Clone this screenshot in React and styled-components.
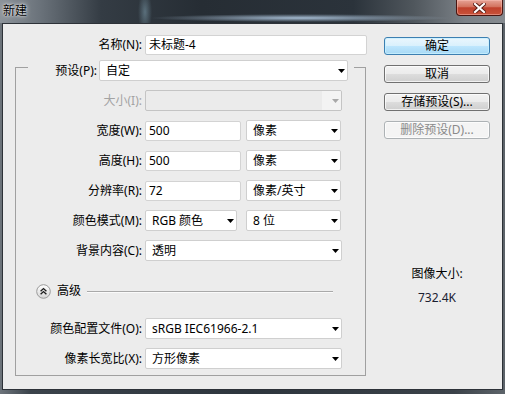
import styled, { createGlobalStyle } from "styled-components";

const font = `"Noto Sans", "Noto Sans CJK SC", sans-serif`;

const GlobalStyle = createGlobalStyle`
  html, body {
    margin: 0;
    padding: 0;
  }
  body {
    background: #2c353d;
    font-family: ${font};
    font-size: 12px;
    color: #000;
  }
`;

const Window = styled.div`
  width: 505px;
  height: 394px;
  display: flex;
  flex-direction: column;
  overflow: hidden;
  background: linear-gradient(
    90deg,
    #6d747b 0%,
    #3b434b 6%,
    #2d353d 50%,
    #3b4249 90%,
    #5d646a 100%
  );
`;

const TitleBar = styled.div`
  height: 23px;
  flex: none;
  display: flex;
  justify-content: space-between;
  align-items: flex-start;
  background:
    radial-gradient(ellipse 150px 4px at 300px 18px, rgba(185, 210, 235, 0.85), rgba(185, 210, 235, 0)),
    radial-gradient(ellipse 7px 22px at 145px 12px, rgba(120, 150, 165, 0.6), rgba(120, 150, 165, 0)),
    linear-gradient(
      90deg,
      #8c939a 0%,
      #6a727a 8%,
      #343c44 20%,
      #262d34 40%,
      #2b333b 70%,
      #50575d 82%,
      #7b8187 92%,
      #868b90 100%
    );
`;

const Title = styled.div`
  padding: 4px 0 0 3px;
  line-height: 14px;
  color: #000;
  text-shadow: 0 0 5px rgba(255, 255, 255, 0.9), 0 0 2px rgba(255, 255, 255, 0.9);
`;

const CloseButton = styled.div`
  width: 47px;
  height: 16px;
  margin-right: 2px;
  box-sizing: border-box;
  border: 1px solid #4a1510;
  border-top: none;
  border-radius: 0 0 4px 4px;
  display: flex;
  align-items: center;
  justify-content: center;
  background: linear-gradient(#e6a396 0%, #d3735f 45%, #c0412c 52%, #c8523a 100%);
  box-shadow: inset 0 0 0 1px rgba(255, 200, 190, 0.45);
`;

const Client = styled.div`
  flex: 1;
  margin: 0 2px 4px;
  border: 1px solid #2d3238;
  background: #ececec;
  display: flex;
  padding-top: 11px;
  box-sizing: border-box;
`;

const LeftPane = styled.div`
  width: 364px;
  padding-left: 12px;
  box-sizing: border-box;
  flex: none;
`;

const RightPane = styled.div`
  width: 106px;
  margin-left: 17px;
  padding-top: 2px;
  display: flex;
  flex-direction: column;
`;

const NameRow = styled.div`
  display: grid;
  grid-template-columns: 127px 222px;
  column-gap: 3px;
  align-items: center;
  height: 20px;
`;

const Label = styled.span`
  text-align: right;
  white-space: nowrap;
  line-height: 16px;
  color: ${(p) => (p.$disabled ? "#a3a3a3" : "#000")};
`;

const TextBox = styled.div`
  height: 20px;
  width: ${(p) => p.$width || 222}px;
  box-sizing: border-box;
  border: 1px solid #d3d3d3;
  border-radius: 2px;
  background: #fff;
  padding-left: 3px;
  line-height: 18px;
  white-space: nowrap;
`;

const Group = styled.fieldset`
  width: 351px;
  box-sizing: border-box;
  margin: -2px 0 0 0;
  padding: 0 0 6px 0;
  border: 1px solid #a0a0a0;
  min-inline-size: 0;
`;

const Legend = styled.legend`
  display: flex;
  align-items: center;
  gap: 2px;
  margin-left: 12px;
  padding: 7px 6px 0 0;
  float: none;
`;

const LegendLabel = styled(Label)`
  width: 69px;
`;

const FieldRow = styled.div`
  display: grid;
  grid-template-columns: 126px auto;
  column-gap: 3px;
  align-items: center;
  height: 21px;
  margin-top: ${(p) => p.$gap ?? 9}px;
`;

const Pair = styled.div`
  width: 196px;
  display: flex;
  justify-content: space-between;
  align-items: center;
`;

const SelectBox = styled.div`
  height: 21px;
  width: ${(p) => p.$width}px;
  box-sizing: border-box;
  border: 1px solid ${(p) => (p.$disabled ? "#c4c4c4" : "#cfcfcf")};
  border-radius: 2px;
  background: ${(p) => (p.$disabled ? "#ebebeb" : "#fff")};
  display: flex;
  align-items: center;
  overflow: hidden;
`;

const SelectText = styled.span`
  flex: 1;
  padding-left: 6px;
  line-height: 19px;
  white-space: nowrap;
`;

const ArrowBox = styled.span`
  width: 19px;
  height: 100%;
  display: flex;
  align-items: center;
  justify-content: flex-end;
  padding-right: 2px;
  box-sizing: border-box;
  background: ${(p) => (p.$disabled ? "#f3f3f3" : "transparent")};
`;

const AdvancedRow = styled.div`
  display: flex;
  align-items: center;
  height: 16px;
  margin-top: 22px;
  padding-left: 20px;
  padding-right: 32px;
  gap: 6px;
`;

const AdvancedText = styled.span`
  line-height: 16px;
`;

const Rule = styled.div`
  flex: 1;
  height: 1px;
  background: #a9a9a9;
  box-shadow: 0 1px 0 #fafafa;
`;

const Button = styled.div`
  height: 18px;
  box-sizing: border-box;
  margin-bottom: 10px;
  border-radius: 3px;
  text-align: center;
  line-height: 16px;
  border: 1px solid
    ${(p) => (p.$variant === "default" ? "#3c7fb1" : p.$variant === "disabled" ? "#adb2b5" : "#707070")};
  color: ${(p) => (p.$variant === "disabled" ? "#8a8a8a" : "#000")};
  background: ${(p) =>
    p.$variant === "default"
      ? "linear-gradient(#eaf6fd 0%, #d9f0fc 50%, #bee6fd 50%, #a7d9f5 100%)"
      : p.$variant === "disabled"
      ? "#f4f4f4"
      : "linear-gradient(#f2f2f2 0%, #ebebeb 50%, #dddddd 50%, #cfcfcf 100%)"};
  box-shadow: inset 0 0 0 1px
    ${(p) => (p.$variant === "default" ? "rgba(200, 240, 255, 0.8)" : "rgba(255, 255, 255, 0.7)")};
`;

const SizeInfo = styled.div`
  margin-top: 117px;
  text-align: center;
  line-height: 16px;
`;

const SizeValue = styled.div`
  margin-top: 8px;
  text-align: center;
  line-height: 16px;
  color: #1a2030;
`;

const Arrow = ({ disabled }) => (
  <svg width="7" height="4" viewBox="0 0 7 4">
    <path d="M0 0h7L3.5 4z" fill={disabled ? "#a8a8a8" : "#000"} />
  </svg>
);

const Select = ({ width, value, disabled }) => (
  <SelectBox $width={width} $disabled={disabled}>
    <SelectText>{value}</SelectText>
    <ArrowBox $disabled={disabled}>
      <Arrow disabled={disabled} />
    </ArrowBox>
  </SelectBox>
);

const AdvancedIcon = () => (
  <svg width="15" height="15" viewBox="0 0 15 15">
    <defs>
      <linearGradient id="advBg" x1="0" y1="0" x2="0" y2="1">
        <stop offset="0" stopColor="#ffffff" />
        <stop offset="1" stopColor="#d6d6d6" />
      </linearGradient>
    </defs>
    <circle cx="7.5" cy="7.5" r="6.8" fill="url(#advBg)" stroke="#9a9a9a" />
    <path
      d="M4.6 7.2 L7.5 4.6 L10.4 7.2 M4.6 10.2 L7.5 7.6 L10.4 10.2"
      fill="none"
      stroke="#1e1e1e"
      strokeWidth="1.4"
    />
  </svg>
);

const CloseIcon = () => (
  <svg width="13" height="10" viewBox="0 0 13 10">
    <path d="M2 1 L11 9 M11 1 L2 9" stroke="#5a1c14" strokeWidth="4" strokeLinecap="square" />
    <path d="M2 1 L11 9 M11 1 L2 9" stroke="#fff" strokeWidth="2.2" strokeLinecap="square" />
  </svg>
);

export default function App() {
  return (
    <>
      <GlobalStyle />
      <Window>
        <TitleBar>
          <Title>新建</Title>
          <CloseButton>
            <CloseIcon />
          </CloseButton>
        </TitleBar>
        <Client>
          <LeftPane>
            <NameRow>
              <Label>名称(N):</Label>
              <TextBox>未标题-4</TextBox>
            </NameRow>
            <Group>
              <Legend>
                <LegendLabel>预设(P):</LegendLabel>
                <Select width={249} value="自定" />
              </Legend>
              <FieldRow>
                <Label $disabled>大小(I):</Label>
                <Select width={197} value="" disabled />
              </FieldRow>
              <FieldRow>
                <Label>宽度(W):</Label>
                <Pair>
                  <TextBox $width={96}>500</TextBox>
                  <Select width={95} value="像素" />
                </Pair>
              </FieldRow>
              <FieldRow>
                <Label>高度(H):</Label>
                <Pair>
                  <TextBox $width={96}>500</TextBox>
                  <Select width={95} value="像素" />
                </Pair>
              </FieldRow>
              <FieldRow>
                <Label>分辨率(R):</Label>
                <Pair>
                  <TextBox $width={96}>72</TextBox>
                  <Select width={95} value="像素/英寸" />
                </Pair>
              </FieldRow>
              <FieldRow>
                <Label>颜色模式(M):</Label>
                <Pair>
                  <Select width={92} value="RGB 颜色" />
                  <Select width={95} value="8 位" />
                </Pair>
              </FieldRow>
              <FieldRow>
                <Label>背景内容(C):</Label>
                <Select width={197} value="透明" />
              </FieldRow>
              <AdvancedRow>
                <AdvancedIcon />
                <AdvancedText>高级</AdvancedText>
                <Rule />
              </AdvancedRow>
              <FieldRow $gap={19}>
                <Label>颜色配置文件(O):</Label>
                <Select width={197} value="sRGB IEC61966-2.1" />
              </FieldRow>
              <FieldRow>
                <Label>像素长宽比(X):</Label>
                <Select width={197} value="方形像素" />
              </FieldRow>
            </Group>
          </LeftPane>
          <RightPane>
            <Button $variant="default">确定</Button>
            <Button>取消</Button>
            <Button>存储预设(S)...</Button>
            <Button $variant="disabled">删除预设(D)...</Button>
            <SizeInfo>图像大小:</SizeInfo>
            <SizeValue>732.4K</SizeValue>
          </RightPane>
        </Client>
      </Window>
    </>
  );
}
